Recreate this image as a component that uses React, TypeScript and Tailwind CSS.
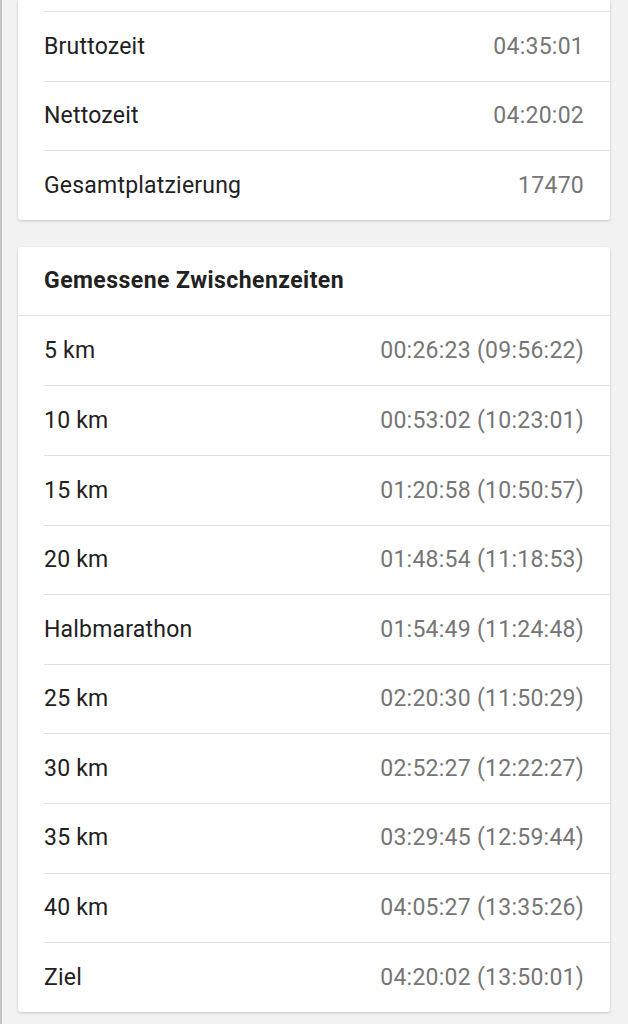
const summary = [
  { label: 'Bruttozeit', value: '04:35:01' },
  { label: 'Nettozeit', value: '04:20:02' },
  { label: 'Gesamtplatzierung', value: '17470' },
];

const splits = [
  { label: '5 km', value: '00:26:23 (09:56:22)' },
  { label: '10 km', value: '00:53:02 (10:23:01)' },
  { label: '15 km', value: '01:20:58 (10:50:57)' },
  { label: '20 km', value: '01:48:54 (11:18:53)' },
  { label: 'Halbmarathon', value: '01:54:49 (11:24:48)' },
  { label: '25 km', value: '02:20:30 (11:50:29)' },
  { label: '30 km', value: '02:52:27 (12:22:27)' },
  { label: '35 km', value: '03:29:45 (12:59:44)' },
  { label: '40 km', value: '04:05:27 (13:35:26)' },
  { label: 'Ziel', value: '04:20:02 (13:50:01)' },
];

function Row({ label, value, first }: { label: string; value: string; first?: boolean }) {
  return (
    <div
      className={
        'ml-[26px] flex h-[69.6px] items-center justify-between pt-[1px] pr-[26px] ' +
        (first ? '' : 'border-t border-[#e0e0e0]')
      }
    >
      <span className="text-[23px] tracking-[0.2px] text-[#212121]">{label}</span>
      <span className="text-[23px] tracking-[0.25px] text-[#767676]">{value}</span>
    </div>
  );
}

export default function App() {
  return (
    <div
      className="min-h-[1024px] border-l-2 border-[#c4c4c4] bg-[#f2f2f2] pr-[18px] pl-[16px] pb-8"
      style={{ fontFamily: 'Roboto, "Liberation Sans", sans-serif' }}
    >
      {/* Result summary (top cut off) */}
      <div className="rounded-b-[3px] bg-white shadow-[0_1px_3px_rgba(0,0,0,0.18)]">
        <div className="h-[11px]" />
        {summary.map((r) => (
          <Row key={r.label} {...r} />
        ))}
      </div>

      {/* Splits */}
      <div className="mt-[27px] rounded-[3px] bg-white shadow-[0_1px_3px_rgba(0,0,0,0.18)]">
        <div className="flex h-[68px] items-center px-[26px] pt-[1px]">
          <h2 className="text-[23px] font-bold tracking-[0.45px] text-[#212121]">
            Gemessene Zwischenzeiten
          </h2>
        </div>
        <div className="border-t border-[#e0e0e0]">
          {splits.map((r, i) => (
            <Row key={r.label} {...r} first={i === 0} />
          ))}
        </div>
      </div>
    </div>
  );
}
